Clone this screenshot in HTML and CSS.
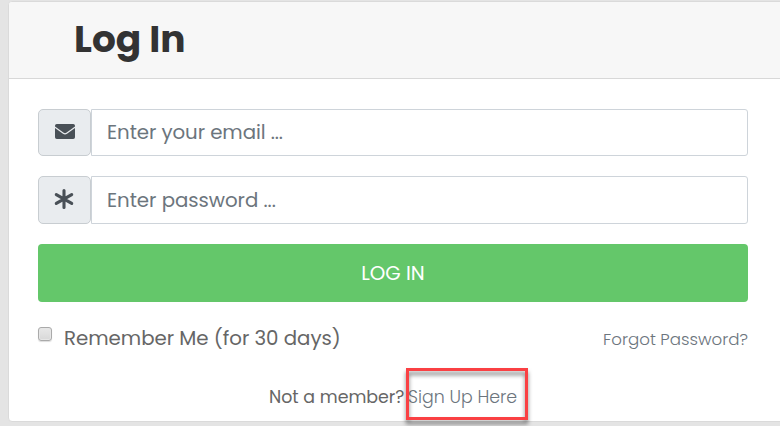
FILE: index.html
```html
<!DOCTYPE html>
<html lang="en">
<head>
<meta charset="utf-8">
<title>Log In</title>
<link rel="stylesheet" href="styles.css">
</head>
<body>
<main class="card">
  <header class="card-header"><h1>Log In</h1></header>
  <form class="card-body">
    <div class="input-group">
      <span class="addon"><svg width="20" height="15" viewBox="0 0 20 15"><path fill="#495057" d="M1.8 0h16.4Q20 0 20 1.8v.8l-8.7 6.1q-1.3.9-2.6 0L0 2.6v-.8Q0 0 1.8 0zM0 4.1l8 5.7q2 1.2 4 0l8-5.7v9.1q0 1.8-1.8 1.8H1.8Q0 15 0 13.200z"/></svg></span>
      <input class="field email" type="text" placeholder="Enter your email ...">
    </div>
    <div class="input-group tall">
      <span class="addon"><svg class="star" width="20" height="20" viewBox="0 0 20 20"><path fill="none" stroke="#495057" stroke-width="3.100" stroke-linecap="round" d="M10 1.600v16.800M2.300 5.600l15.400 8.800M17.700 5.600L2.300 14.400"/></svg></span>
      <input class="field password" type="password" placeholder="Enter password ...">
    </div>
    <button class="submit" type="button">LOG IN</button>
    <div class="options">
      <label class="remember"><input class="check" type="checkbox"><span>Remember Me (for 30 days)</span></label>
      <a class="forgot">Forgot Password?</a>
    </div>
    <div class="signup"><span class="ask">Not a member?</span><a class="join">Sign Up Here<i class="highlight"></i></a></div>
  </form>
</main>
</body>
</html>
```
FILE: styles.css
```css
* { box-sizing: border-box; }
body {
  margin: 0;
  height: 426px;
  overflow: hidden;
  background: #e4e4e4;
  font-family: Poppins, Inter, "Liberation Sans", sans-serif;
  color: #666;
}
.card {
  width: 790px;
  height: 421px;
  margin: 1px 0 0 8px;
  background: #fff;
  border: 1px solid #dadada;
  border-radius: 4px;
}
.card-header {
  height: 77px;
  padding-left: 65px;
  background: #f7f7f7;
  border-bottom: 1px solid #d8d8d8;
  border-radius: 3px 3px 0 0;
}
h1 {
  margin: 0;
  font-size: 37.500px;
  line-height: 74px;
  font-weight: 700;
  color: #333;
}
.card-body { width: 739px; padding: 30px 0 0 29px; }
.input-group { display: flex; width: 710px; height: 47px; margin-bottom: 20px; }
.input-group.tall { height: 48px; }
.addon {
  display: flex;
  align-items: center;
  justify-content: center;
  width: 53px;
  padding-bottom: 2px;
  background: #e9ecef;
  border: 1px solid #c8cdd1;
  border-radius: 5px;
}
.star { margin-bottom: 1px; margin-right: 1px; }
.field {
  flex: 1;
  min-width: 0;
  padding: 0 15px;
  border: 1px solid #ced4da;
  border-radius: 0 3px 3px 0;
  background: #fff;
  font: 400 19.800px Poppins, Inter, sans-serif;
  letter-spacing: -0.050px;
  outline: 0;
}
.email { padding-bottom: 2px; letter-spacing: -0.080px; }
.field::placeholder { color: #6c757d; opacity: 1; }
.submit {
  display: block;
  width: 710px;
  height: 58px;
  padding: 0;
  border: 0;
  border-radius: 4px;
  background: #64c76a;
  color: #fff;
  font: 400 19.800px Poppins, Inter, sans-serif;
}
.options { display: flex; justify-content: space-between; width: 710px; height: 72px; }
.remember { display: flex; font-size: 19.800px; line-height: 72px; letter-spacing: -0.030px; }
.check {
  appearance: none;
  width: 14px;
  height: 14px;
  margin: 25px 12px 0 0;
  border: 1px solid #aaa;
  border-radius: 3px;
  background: linear-gradient(#e8e8e8, #d8d8d8);
  box-shadow: inset 0 0 0 1px #e6e6e6, 0 1px 1px #ddd;
}
.forgot { font-size: 16.650px; font-weight: 300; line-height: 75px; color: #6c757d; }
.signup { display: flex; padding-left: 231px; font-size: 17.400px; line-height: 46px; }
.ask { width: 139px; white-space: nowrap; }
.join { position: relative; font-weight: 300; color: #6c757d; white-space: nowrap; }
.highlight {
  position: absolute;
  left: -2px;
  top: -6px;
  width: 122px;
  height: 52px;
  border: 3px solid #fa4043;
  filter: drop-shadow(0 4px 2px rgba(0, 0, 0, .5));
}
```
